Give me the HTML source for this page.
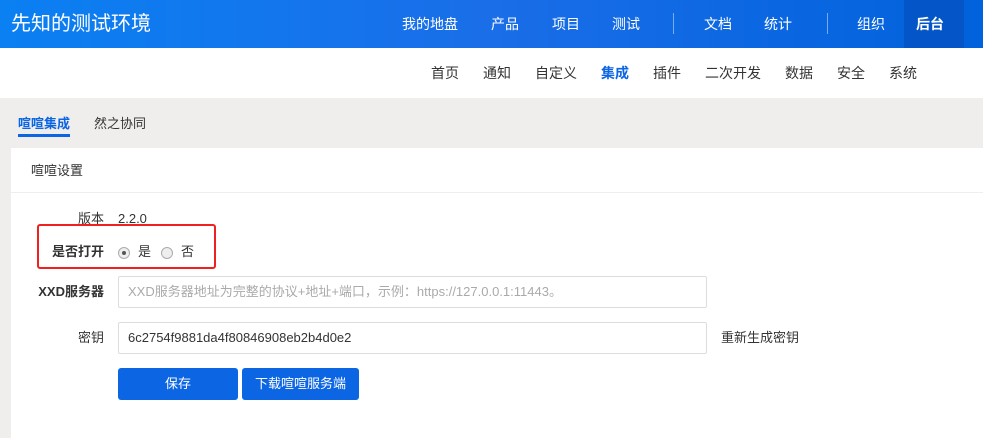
<!DOCTYPE html>
<html><head><meta charset="utf-8"><style>
*{margin:0;padding:0;box-sizing:border-box}
body{width:983px;height:425px;overflow:hidden;background:#efeeed;font-family:"Liberation Sans","Noto Sans CJK SC",sans-serif;font-size:13px;color:#333;position:relative}
.a{position:absolute;white-space:nowrap;line-height:16px}
#top{position:absolute;left:0;top:0;width:983px;height:48px;background:linear-gradient(90deg,#0a80f2,#1a6ee8 50%,#0062dc)}
#top .a{color:#fff;font-size:14px;top:14px;line-height:20px}
.sep{position:absolute;top:13px;width:1px;height:21px;background:rgba(255,255,255,.45)}
#sub{position:absolute;left:0;top:48px;width:983px;height:50px;background:#fff}
#sub .a{font-size:14px;top:15px;line-height:20px;color:#333}
.card{position:absolute;left:11px;top:148px;width:980px;height:290px;background:#fff}
.lbl{position:absolute;text-align:right;right:879px;font-size:13px;line-height:16px;color:#333;font-weight:bold;white-space:nowrap}
.inp{position:absolute;left:118px;width:589px;height:32px;border:1px solid #ddd;border-radius:2px;padding:0 9px;line-height:30px;font-size:13px;white-space:nowrap}
.btn{position:absolute;top:368px;height:32px;background:#0c66e4;color:#fff;border-radius:3px;text-align:center;line-height:32px;font-size:13px}
.radio{position:absolute;width:12px;height:12px;border:1px solid #aaa;border-radius:50%;background:#eee}
</style></head><body>
<div id="top">
<div class="a" style="left:11px;top:11px;font-size:20px;line-height:26px">先知的测试环境</div>
<div class="a" style="left:402px">我的地盘</div>
<div class="a" style="left:491px">产品</div>
<div class="a" style="left:552px">项目</div>
<div class="a" style="left:612px">测试</div>
<div class="sep" style="left:673px"></div>
<div class="a" style="left:704px">文档</div>
<div class="a" style="left:764px">统计</div>
<div class="sep" style="left:827px"></div>
<div class="a" style="left:857px">组织</div>
<div style="position:absolute;left:904px;top:0;width:60px;height:48px;background:#0456c8"></div>
<div class="a" style="left:916px;font-weight:bold">后台</div>
</div>
<div id="sub">
<div class="a" style="left:431px">首页</div>
<div class="a" style="left:483px">通知</div>
<div class="a" style="left:535px">自定义</div>
<div class="a" style="left:601px;color:#0c66e4;font-weight:bold">集成</div>
<div class="a" style="left:653px">插件</div>
<div class="a" style="left:705px">二次开发</div>
<div class="a" style="left:785px">数据</div>
<div class="a" style="left:837px">安全</div>
<div class="a" style="left:889px">系统</div>
</div>
<div class="a" style="left:18px;top:116px;color:#0c66e4;font-weight:bold">喧喧集成</div>
<div style="position:absolute;left:18px;top:134px;width:52px;height:3px;background:#0c66e4"></div>
<div class="a" style="left:94px;top:116px">然之协同</div>
<div class="card">
<div class="a" style="left:20px;top:15px;font-size:13px">喧喧设置</div>
<div style="position:absolute;left:0;top:44px;width:100%;height:1px;background:#eee"></div>
</div>
<div class="lbl" style="top:211px;font-weight:normal">版本</div>
<div class="a" style="left:118px;top:211px">2.2.0</div>
<div style="position:absolute;left:37px;top:224px;width:179px;height:45px;border:2px solid #f02020;border-radius:3px"></div>
<div class="lbl" style="top:244px">是否打开</div>
<div class="radio" style="left:118px;top:247px"><div style="position:absolute;left:3px;top:3px;width:4px;height:4px;border-radius:50%;background:#555"></div></div>
<div class="a" style="left:138px;top:244px">是</div>
<div class="radio" style="left:161px;top:247px"></div>
<div class="a" style="left:181px;top:244px">否</div>
<div class="lbl" style="top:284px">XXD服务器</div>
<div class="inp" style="top:276px;color:#aaa">XXD服务器地址为完整的协议+地址+端口，示例：https://127.0.0.1:11443。</div>
<div class="lbl" style="top:330px;font-weight:normal">密钥</div>
<div class="inp" style="top:322px;color:#333">6c2754f9881da4f80846908eb2b4d0e2</div>
<div class="a" style="left:721px;top:330px">重新生成密钥</div>
<div class="btn" style="left:118px;width:120px">保存</div>
<div class="btn" style="left:242px;width:117px">下载喧喧服务端</div>
</body></html>
